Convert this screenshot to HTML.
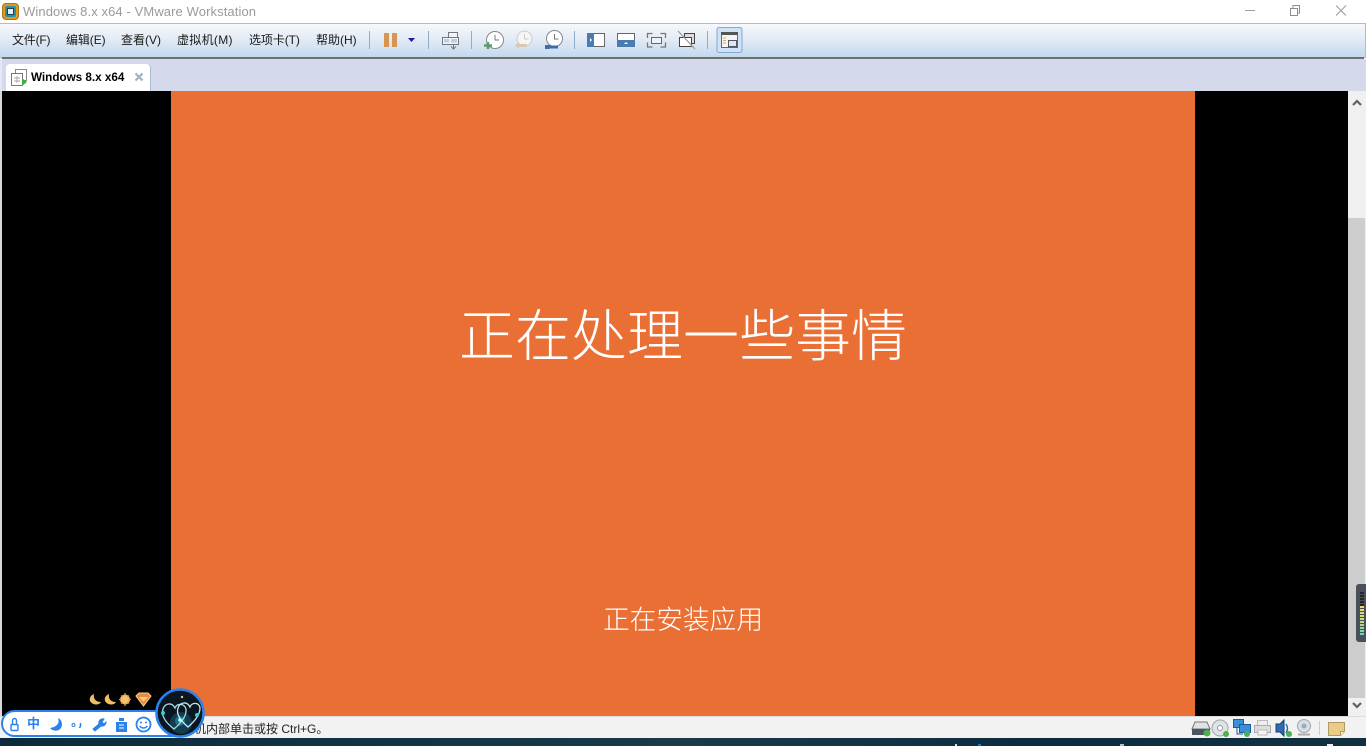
<!DOCTYPE html>
<html><head><meta charset="utf-8"><style>
html,body{margin:0;padding:0;width:1366px;height:746px;overflow:hidden;background:#fff}
body{position:relative;font-family:"Liberation Sans","Noto Sans CJK SC",sans-serif}
.a{position:absolute}
.m{position:absolute;top:32px;font-size:12px;line-height:16px;color:#1a1a1a;white-space:nowrap}
.s{position:absolute;top:31px;width:1px;height:18px;background:#8fabc9}
svg{position:absolute;overflow:visible}
</style></head><body>
<div class="a" style="left:0;top:0;width:1366px;height:24px;background:#fff"></div>
<svg style="left:2px;top:3px" width="17" height="17" viewBox="0 0 17 17"><rect x=".5" y=".5" width="16" height="16" rx="3.5" fill="#e09a22" stroke="#a8741c"/><rect x="3" y="3" width="11" height="11" rx="2" fill="#2f8f9f"/><rect x="5.500" y="5.500" width="6" height="6" fill="#e8eef2" stroke="#1d3f60"/></svg>
<div class="a" style="left:23px;top:3px;font-size:13px;line-height:18px;color:#9a9a9a;letter-spacing:.1px;white-space:nowrap">Windows 8.x x64 - VMware Workstation</div>
<svg style="left:1190px;top:0" width="176" height="24"><path d="M55 10.500H65" stroke="#a0a0a0" fill="none"/><path d="M100.500 8.500h7v7h-7zM103 8V5.500h6.500V13H108" stroke="#8e8e8e" fill="none"/><path d="M146 5.500L156 15.500M156 5.500L146 15.500" stroke="#9a9a9a" fill="none"/></svg>

<div class="a" style="left:0;top:23px;width:1365px;height:33px;border:1px solid #a5bfd9;border-left:0;background:linear-gradient(#f6f8fc,#e6edf6 40%,#c3d8ee)"></div>
<div class="m" style="left:12px;letter-spacing:-.2px">文件(F)</div>
<div class="m" style="left:66px;letter-spacing:-.1px">编辑(E)</div>
<div class="m" style="left:121px">查看(V)</div>
<div class="m" style="left:177px;letter-spacing:.3px">虚拟机(M)</div>
<div class="m" style="left:249px;letter-spacing:-.1px">选项卡(T)</div>
<div class="m" style="left:316px">帮助(H)</div>
<div class="s" style="left:369px"></div>
<div class="s" style="left:428px"></div>
<div class="s" style="left:471px"></div>
<div class="s" style="left:574px"></div>
<div class="s" style="left:707px"></div>
<svg style="left:370px;top:20px" width="390" height="40" viewBox="0 0 390 40" fill="none">
<rect x="14" y="13" width="5" height="14" fill="#d69550"/><rect x="22" y="13" width="5" height="14" fill="#d69550"/>
<path d="M38 18h7l-3.500 4z" fill="#1a1ab0"/>
<g stroke="#777"><rect x="78.500" y="12.500" width="9" height="5" fill="#f0f3f7"/><rect x="72.500" y="17.500" width="16" height="7" fill="#f0f3f7"/><rect x="74" y="19" width="5" height="3.500" fill="#b8d0e8" stroke="none"/><rect x="81" y="19" width="6" height="3.500" fill="#b8d0e8" stroke="none"/><path d="M83.500 25v3.500M81 26.500l2.500 2.500 2.500-2.500"/></g>
<circle cx="125" cy="20" r="8.500" fill="#fff" stroke="#888"/><path d="M125 15v5h4" stroke="#777"/><path d="M118 22v7M114 25.500h8" stroke="#5f9a6a" stroke-width="2.500"/>
<circle cx="154.500" cy="18.500" r="7.500" fill="#f5f5f5" stroke="#ccc"/><path d="M154.500 14v5h4" stroke="#ccc"/><path d="M148 25.500h9" stroke="#d8c8b8" stroke-width="3"/><path d="M149 22l-4 3.500 4 3.500z" fill="#d8c8b8"/>
<circle cx="184.500" cy="18.500" r="8" fill="#fff" stroke="#888"/><path d="M184.500 14v5h4" stroke="#777"/><path d="M178 27h10" stroke="#3a6ea5" stroke-width="3"/><path d="M175 25h4.500v4H175" fill="#3a6ea5"/>
<rect x="217.500" y="13.500" width="17" height="13" fill="#fff" stroke="#666"/><rect x="217" y="13" width="7" height="14" fill="#4a7cb0"/><path d="M220 18v4l2-2z" fill="#fff"/>
<rect x="247.500" y="13.500" width="17" height="13" fill="#fff" stroke="#666"/><rect x="247" y="20" width="18" height="7" fill="#4a7cb0"/><path d="M254 24h4l-2-2z" fill="#fff"/>
<rect x="281.500" y="17.500" width="10" height="6" fill="#eef3f9" stroke="#666"/><path d="M277.500 18v-4.500h5M290.500 13.500h5V18M277.500 22.500V27h5M290.500 27h5v-4.500" stroke="#777" stroke-width="1.300"/>
<rect x="314.500" y="13.500" width="10" height="10" fill="#ddd" stroke="#444"/><rect x="309.500" y="17.500" width="12" height="9" fill="#fff" stroke="#444"/><path d="M308 11l17 18" stroke="#999" stroke-width="1.200"/>
<rect x="347" y="7.500" width="25" height="25" rx="2" fill="#cfe2f6" stroke="#86a8d0"/><rect x="351.500" y="12.500" width="16" height="15" fill="#f4f4f4" stroke="#666"/><rect x="351" y="12" width="17" height="3" fill="#555"/><path d="M353 18h3M353 20.500h3M353 23h3" stroke="#d9b04a"/><rect x="358.500" y="20.500" width="8" height="6" fill="#dce8f2" stroke="#556"/>
</svg>
<div class="a" style="left:2px;top:57px;width:1362px;height:2px;background:#6f6f6f"></div>
<div class="a" style="left:0;top:58px;width:2px;height:34px;background:#e4e8f3"></div>
<div class="a" style="left:2px;top:59px;width:1364px;height:32px;background:#d4daec"></div>
<div class="a" style="left:6px;top:64px;width:144px;height:27px;background:#fff;border-radius:4px 4px 0 0;border-right:1px solid #a9bcd6"></div>
<svg style="left:11px;top:69px" width="18" height="18" fill="none"><rect x="4.500" y=".5" width="11" height="11" fill="#fff" stroke="#888"/><rect x=".5" y="4.500" width="11" height="12" fill="#fff" stroke="#777"/><path d="M3 9h6M3 12h6M6 7v7" stroke="#aaa"/><path d="M11 9l5 4-5 4z" fill="#3fae3f"/></svg>
<div class="a" style="left:31px;top:70px;font-size:11.700px;line-height:16px;font-weight:bold;color:#000;white-space:nowrap">Windows 8.x x64</div>
<svg style="left:134px;top:72px" width="11" height="11"><path d="M1.500 1.500L8.500 8.500M8.500 1.500L1.500 8.500" stroke="#9db2c6" stroke-width="2.200"/></svg>

<div class="a" style="left:0;top:91px;width:1348px;height:625px;background:#000"></div>
<div class="a" style="left:0;top:91px;width:2px;height:625px;background:#d8d8d8"></div>
<div class="a" style="left:171px;top:91px;width:1024px;height:625px;background:#ea6f35"></div>
<div class="a" style="left:171px;top:295px;width:1024px;text-align:center;font-size:56px;line-height:76px;font-weight:300;color:#fff;font-family:'Noto Sans CJK SC','WenQuanYi Zen Hei',sans-serif">正在处理一些事情</div>
<div class="a" style="left:171px;top:599px;width:1024px;text-align:center;font-size:26.700px;line-height:38px;font-weight:300;color:#fff;font-family:'Noto Sans CJK SC','WenQuanYi Zen Hei',sans-serif">正在安装应用</div>

<div class="a" style="left:1348px;top:91px;width:18px;height:625px;background:#f0f0f0"></div>
<div class="a" style="left:1348px;top:218px;width:17px;height:480px;background:#cdcdcd"></div>
<svg style="left:1348px;top:91px" width="18" height="625" fill="none"><path d="M5 14l4-4 4 4" stroke="#606060" stroke-width="2.200"/><path d="M5 612l4 4 4-4" stroke="#606060" stroke-width="2.200"/></svg>
<div class="a" style="left:1356px;top:584px;width:10px;height:58px;background:#4a5058;border-radius:3px 0 0 3px"></div>
<div class="a" style="left:1360px;top:592px;width:4px;height:14px;background:repeating-linear-gradient(#23272c 0 2px,#4a5058 2px 3px)"></div>
<div class="a" style="left:1360px;top:606px;width:4px;height:30px;background:repeating-linear-gradient(transparent 0 2px,#4a5058 2px 3px),linear-gradient(#ecd878,#c4dc78 50%,#58d8c8)"></div>

<div class="a" style="left:0;top:716px;width:1366px;height:22px;background:#f2f2f2;border-top:1px solid #dcdcdc;box-sizing:border-box"></div>
<div class="a" style="left:194px;top:721px;font-size:12px;line-height:16px;color:#222;white-space:nowrap">机内部单击或按 Ctrl+G。</div>
<svg style="left:1190px;top:718px" width="176" height="20" fill="none">
<path d="M5 4h12l3 7H2z" fill="#dfe3e8" stroke="#777"/><rect x="2" y="11" width="18" height="6" fill="#4b5560"/><circle cx="17" cy="15" r="3.500" fill="#4db04d"/>
<circle cx="30" cy="10" r="8" fill="#dde3e8" stroke="#a5a5a5"/><circle cx="30" cy="10" r="2.500" fill="#fff" stroke="#999"/><circle cx="36" cy="16" r="3" fill="#4db04d"/>
<rect x="43.500" y="1.500" width="10" height="8" fill="#3a8ed8" stroke="#1c5a9c"/><rect x="49.500" y="6.500" width="11" height="8" fill="#3a8ed8" stroke="#1c5a9c"/><path d="M47 10v6h6" stroke="#1c5a9c"/><circle cx="57" cy="16" r="3" fill="#4db04d"/>
<rect x="67.500" y="2.500" width="10" height="5" fill="#eee" stroke="#bbb"/><rect x="64.500" y="7.500" width="16" height="7" fill="#ddd" stroke="#aaa"/><rect x="68" y="12" width="9" height="5" fill="#f4f4f4" stroke="#bbb"/>
<path d="M86 6h4l4-4v16l-4-4h-4z" fill="#2d6cb5" stroke="#1a3f70"/><path d="M96 6c2 3 2 6 0 9" stroke="#2d6cb5" stroke-width="1.500"/><circle cx="99" cy="16" r="3" fill="#4db04d"/>
<circle cx="114" cy="8" r="6.500" fill="#d8dee2" stroke="#9aa"/><circle cx="114" cy="8" r="2.500" fill="#9ab"/><path d="M108 16.500h12" stroke="#aaa" stroke-width="2"/>
<path d="M129.500 3v14" stroke="#ccc"/>
<path d="M138.500 4.500h16v9l-4 4h-12z" fill="#e8cc88" stroke="#b09a60"/><path d="M150.500 17.500v-4h4" fill="#fff3cc" stroke="#b09a60"/>
</svg>
<div class="a" style="left:0;top:738px;width:1366px;height:8px;background:linear-gradient(90deg,#0c2a3c,#123444 30%,#1a3a4a 50%,#0e2c40 75%,#103040)"></div>
<div class="a" style="left:955px;top:744px;width:2px;height:2px;background:#ddd"></div>
<div class="a" style="left:978px;top:744px;width:3px;height:2px;background:#2a70c8"></div>
<div class="a" style="left:1120px;top:744px;width:4px;height:2px;background:#bbb"></div>
<div class="a" style="left:1327px;top:744px;width:6px;height:2px;background:#eee"></div>

<div class="a" style="left:1px;top:710px;width:190px;height:27px;box-sizing:border-box;background:#fff;border:2px solid #2a82ee;border-radius:14px"></div>
<svg style="left:0;top:710px" width="160" height="30" fill="none">
<rect x="11" y="14.500" width="7" height="6" rx="1" stroke="#2a82ee" stroke-width="1.400"/><path d="M12.500 14v-3.500a2 2 0 0 1 4 0V14" stroke="#2a82ee" stroke-width="1.400"/>
<path d="M58 8c2 5-1 9-8 10 3 4 11 4 12-3 0-3-1-6-4-7z" fill="#2a82ee"/>
<circle cx="73.500" cy="15" r="1.500" stroke="#2a82ee"/><path d="M80.500 13v3l-1 2" stroke="#2a82ee" stroke-width="1.500"/>
<path d="M93 19l6-5a4 4 0 0 1 5-5l-2 3 2 2 2-2a4 4 0 0 1-5 4l-6 5z" fill="#2a82ee" stroke="#2a82ee"/>
<path d="M116 12h11v10h-11z" fill="#2a82ee"/><rect x="119" y="8" width="5" height="3" fill="#2a82ee"/><path d="M119 15h5M119 18h5" stroke="#fff"/>
<circle cx="143.500" cy="14.500" r="7" fill="#fff" stroke="#2a82ee" stroke-width="1.800"/><circle cx="141" cy="12.500" r="1" fill="#2a82ee"/><circle cx="146" cy="12.500" r="1" fill="#2a82ee"/><path d="M139.500 16q4 4 8 0" stroke="#2a82ee" stroke-width="1.300"/>
</svg>
<div class="a" style="left:27px;top:715px;font-size:13px;line-height:18px;font-weight:bold;color:#2a82ee">中</div>
<svg style="left:88px;top:691px" width="64" height="17" fill="none"><g fill="#f3bd62"><path d="M6 3c-1 5 2 8 7 8-2 4-9 3-11-1-1-3 1-6 4-7z"/><path d="M21 3c-1 5 2 8 7 8-2 4-9 3-11-1-1-3 1-6 4-7z"/><circle cx="37" cy="8.500" r="5"/></g><path d="M37 2v13M31 8.500h12M33 4.500l8 8M41 4.500l-8 8" stroke="#e59a3a" stroke-width="1.200"/><circle cx="37" cy="8.500" r="3.500" fill="#f3c46c"/><path d="M48 5l3-3h9l3 3-7.500 10z" fill="#ee8a3a" stroke="#f7d190"/><path d="M51 6h9l-4.500 4.500z" fill="#f7d190"/></svg>
<svg style="left:155px;top:688px" width="50" height="50" fill="none"><circle cx="25" cy="25" r="23.500" fill="#0b1620" stroke="#2a82ee" stroke-width="2.500"/><circle cx="26" cy="35" r="11" fill="#123c50"/><circle cx="25" cy="33" r="5" fill="#1d6f86"/><path d="M19 41C10 34 6 27 8 21 10 15 17 14 20 20 22 15 29 15 31 21 32 28 26 35 19 41z" stroke="#a9dbe3" stroke-width="1.300"/><path d="M33 39C25 32 21 26 23 20 25 14 32 13 35 19 37 14 44 14 45 20 45 27 40 33 33 39z" stroke="#bfe7ee" stroke-width="1.300"/><circle cx="8" cy="25" r="2" fill="#2fd0d8"/><circle cx="42" cy="27" r="2" fill="#2fd0d8"/><circle cx="27" cy="9" r="1.200" fill="#ccc"/><circle cx="25" cy="32" r="1.800" fill="#bff"/></svg>
</body></html>
